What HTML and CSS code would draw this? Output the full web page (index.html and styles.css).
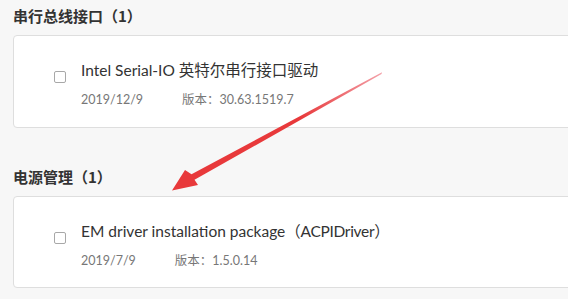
FILE: index.html
```html
<!DOCTYPE html>
<html lang="zh-CN">
<head>
<meta charset="utf-8">
<title>驱动列表</title>
<link rel="stylesheet" href="styles.css">
</head>
<body>
<div class="page">
  <section class="group">
    <h2 class="group-title">串行总线接口（1）</h2>
    <div class="card">
      <span class="check"></span>
      <div class="info">
        <div class="name">Intel Serial-IO 英特尔串行接口驱动</div>
        <div class="meta"><span class="date">2019/12/9</span><span class="ver">版本：30.63.1519.7</span></div>
      </div>
    </div>
  </section>
  <section class="group second">
    <h2 class="group-title">电源管理（1）</h2>
    <div class="card">
      <span class="check"></span>
      <div class="info">
        <div class="name">EM driver installation package<span class="paren">（ACPIDriver）</span></div>
        <div class="meta"><span class="date">2019/7/9</span><span class="ver">版本：1.5.0.14</span></div>
      </div>
    </div>
  </section>
  <svg class="arrow" width="568" height="299" viewBox="0 0 568 299">
    <defs>
      <linearGradient id="fade" x1="382" y1="73" x2="300" y2="118" gradientUnits="userSpaceOnUse">
        <stop offset="0" stop-color="#f3a0a8"/>
        <stop offset="1" stop-color="#e8393b"/>
      </linearGradient>
    </defs>
    <polygon points="382,72.3 191.5,174.2 185,170 172,190.5 198,185 194.5,179.8 381.5,74" fill="url(#fade)"/>
  </svg>
</div>
</body>
</html>
```
FILE: styles.css
```css
html, body {
  margin: 0;
  padding: 0;
}
body {
  background: #f7f7f7;
  width: 568px;
  height: 299px;
  overflow: hidden;
  font-family: "Lato", "Noto Sans CJK SC", sans-serif;
  color: #333;
}
.page {
  position: relative;
  padding: 6px 0 0 13px;
  width: 555px;
  height: 293px;
  overflow: hidden;
}
.group-title {
  margin: 0;
  font-family: "Noto Sans CJK SC", sans-serif;
  font-size: 15px;
  line-height: 20px;
  font-weight: bold;
  color: #333;
}
.second {
  margin-top: 39px;
}
.card {
  margin-top: 9px;
  width: 600px;
  box-sizing: border-box;
  height: 93px;
  background: #fff;
  border: 1px solid #dedede;
  border-radius: 4px;
  display: flex;
  align-items: flex-start;
  padding: 24px 0 0 40px;
}
.second .card {
  height: 92px;
}
.check {
  width: 10px;
  height: 10px;
  border: 1px solid #a8a8a8;
  border-radius: 2px;
  background: #fff;
  margin-top: 11px;
  margin-right: 15px;
  flex: none;
}
.name {
  font-size: 15.5px;
  line-height: 20px;
  color: #333;
}
.paren {
  letter-spacing: -0.3px;
}
.meta {
  margin-top: 10px;
  font-size: 12.5px;
  line-height: 20px;
  color: #777;
  display: flex;
}
.date {
  margin-right: 39px;
}
.arrow {
  position: absolute;
  left: 0;
  top: 0;
}
```
